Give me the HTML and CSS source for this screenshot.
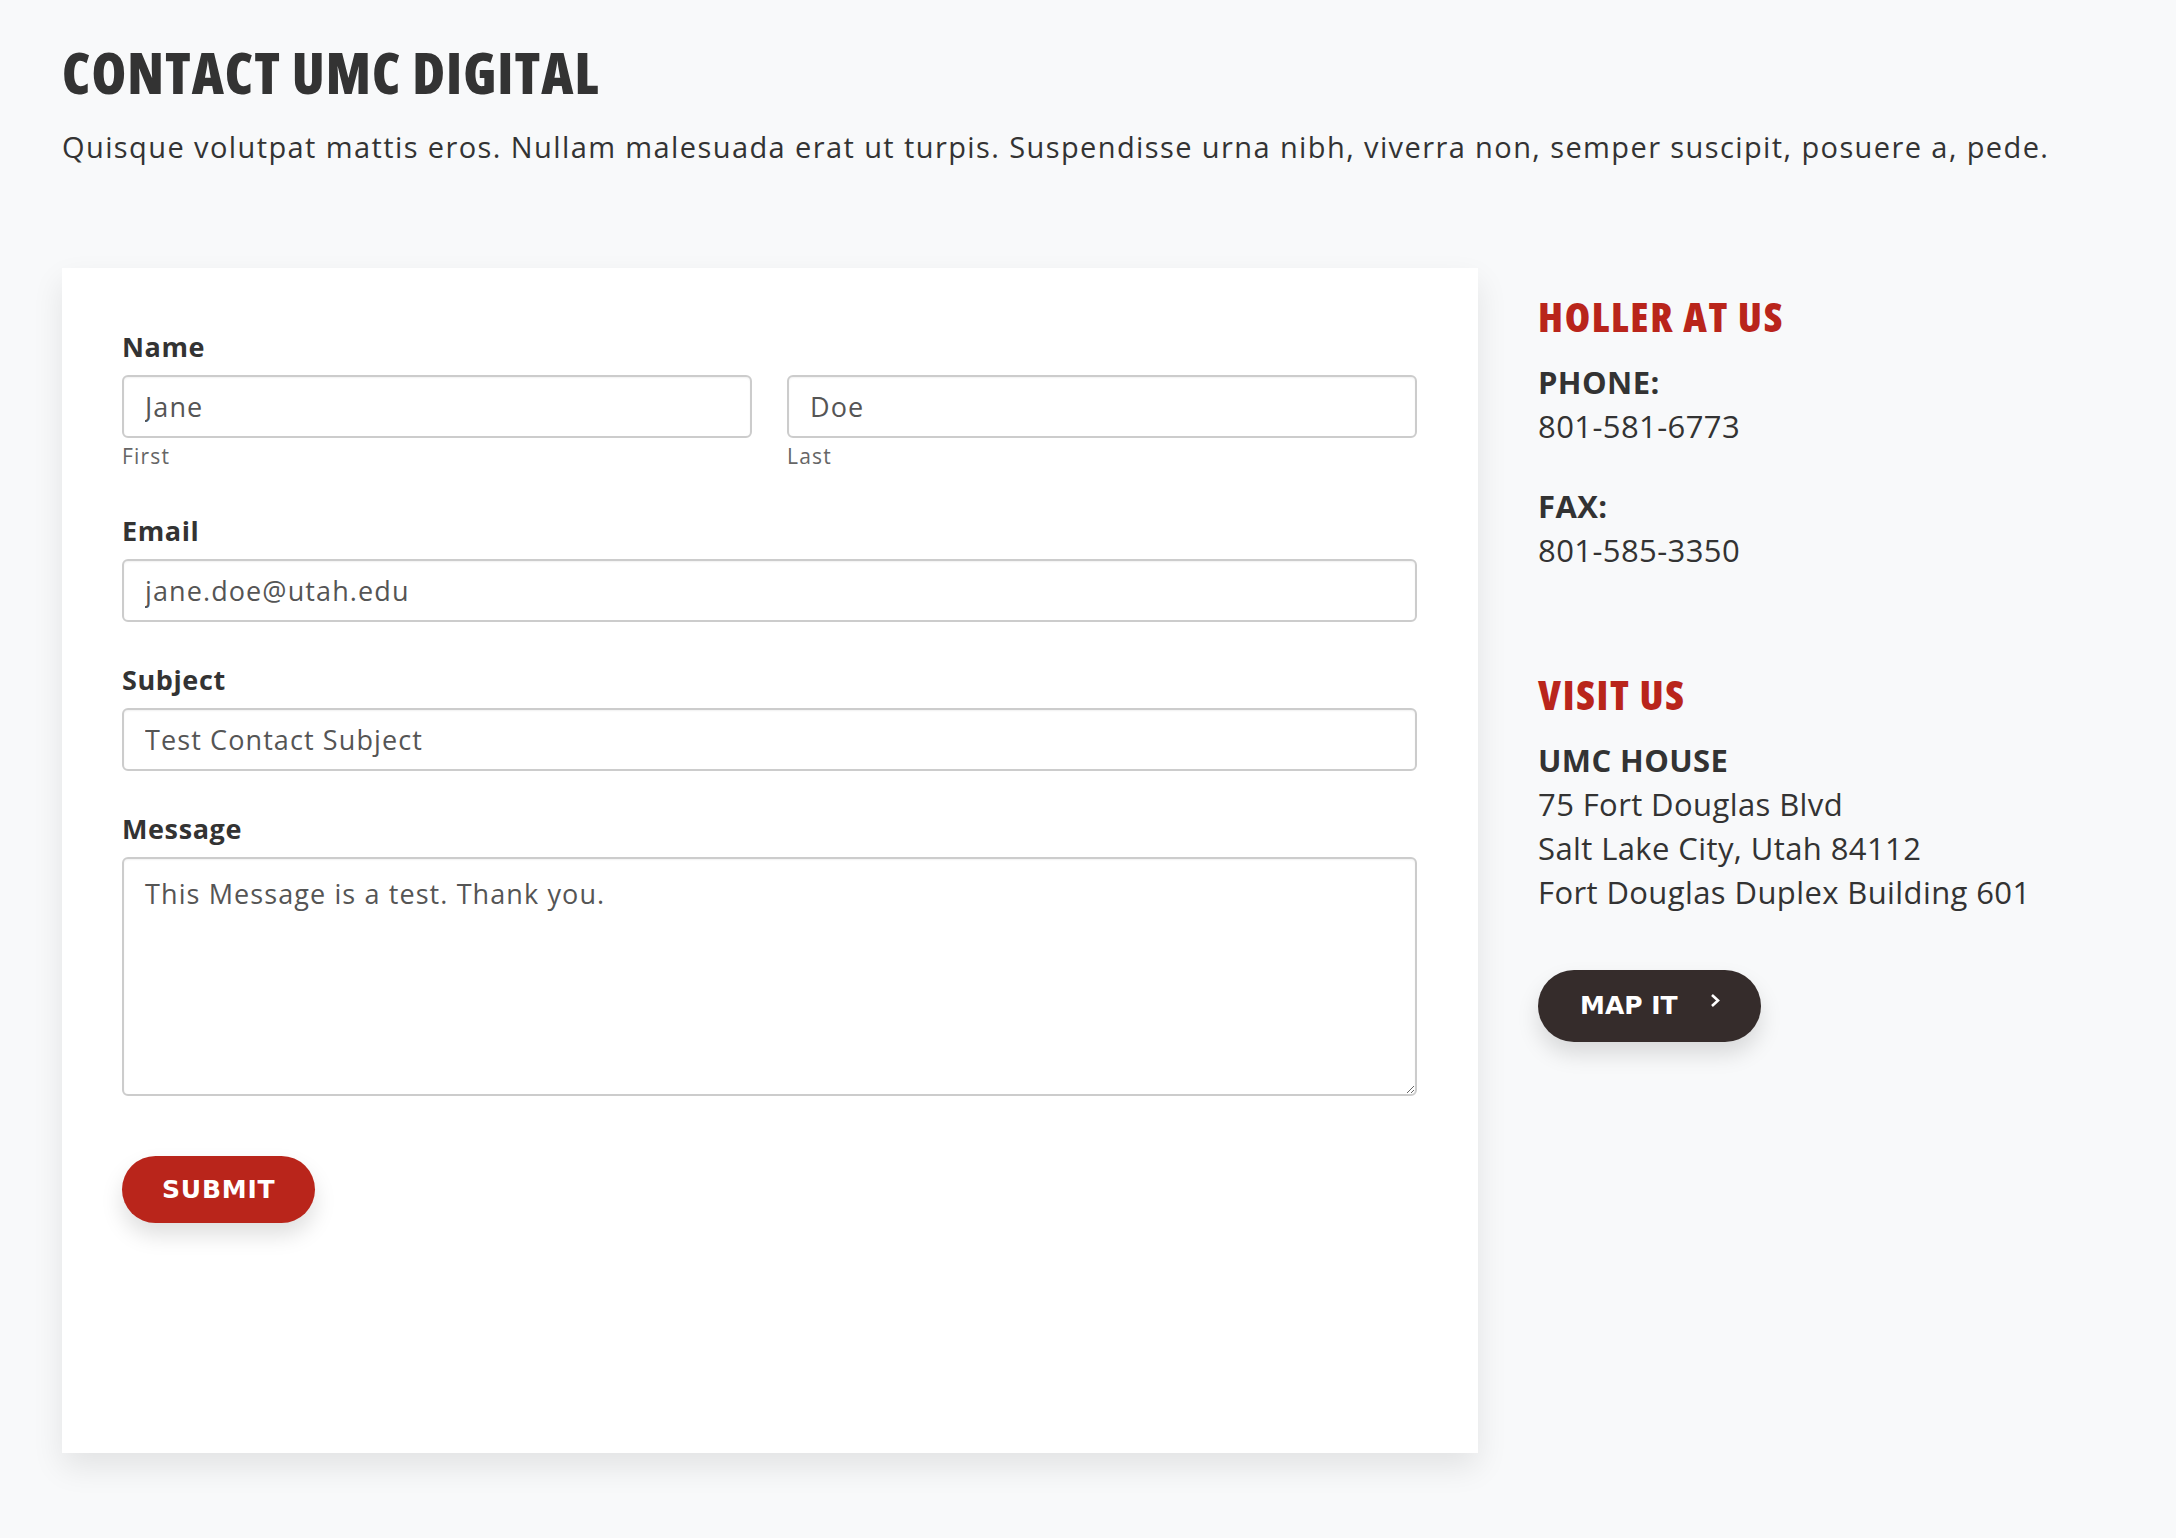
FILE: index.html
```html
<!DOCTYPE html>
<html lang="en">
<head>
  <meta charset="UTF-8">
  <meta name="viewport" content="width=device-width, initial-scale=1.0">
  <title>Contact UMC Digital</title>
  <link rel="stylesheet" href="styles.css">
</head>
<body>
  <div class="page">
    <h1>CONTACT UMC DIGITAL</h1>
    <p class="intro">Quisque volutpat mattis eros. Nullam malesuada erat ut turpis. Suspendisse urna nibh, viverra non, semper suscipit, posuere a, pede.</p>

    <div class="main">
      <form class="card">
        <div class="field name">
          <label>Name</label>
          <div class="name-row">
            <div>
              <input type="text" value="Jane">
              <div class="hint">First</div>
            </div>
            <div>
              <input type="text" value="Doe">
              <div class="hint">Last</div>
            </div>
          </div>
        </div>
        <div class="field">
          <label>Email</label>
          <input type="text" value="jane.doe@utah.edu">
        </div>
        <div class="field">
          <label>Subject</label>
          <input type="text" value="Test Contact Subject">
        </div>
        <div class="field">
          <label>Message</label>
          <textarea>This Message is a test. Thank you.</textarea>
        </div>
        <button type="button" class="btn btn-red">SUBMIT</button>
      </form>

      <div class="sidebar">
        <h2>HOLLER AT US</h2>
        <p class="info"><strong>PHONE:</strong><br>801-581-6773</p>
        <p class="info"><strong>FAX:</strong><br>801-585-3350</p>

        <h2 class="visit">VISIT US</h2>
        <p class="info"><strong>UMC HOUSE</strong><br>75 Fort Douglas Blvd<br>Salt Lake City, Utah 84112<br>Fort Douglas Duplex Building 601</p>

        <a href="#" class="btn btn-dark">MAP IT
          <svg width="11" height="15" viewBox="0 0 11 15"><path d="M2 2l6 5.5-6 5.5" fill="none" stroke="#fff" stroke-width="2.6"/></svg>
        </a>
      </div>
    </div>
  </div>
</body>
</html>
```

FILE: styles.css
```css
body {
  margin: 0;
  background: #f8f9fa;
  color: #333;
  font-family: 'Open Sans', 'Liberation Sans', sans-serif;
}
.page {
  padding: 41px 62px 80px;
}
h1 {
  margin: 0;
  font-family: 'Open Sans', 'DejaVu Sans Condensed', sans-serif;
  font-weight: 800;
  font-stretch: 75%;
  font-size: 56px;
  line-height: 62px;
  letter-spacing: 1px;
  color: #333;
}
.intro {
  margin: 22px 0 0;
  font-size: 29px;
  line-height: 1.5;
  letter-spacing: 1.4px;
}
.main {
  display: flex;
  gap: 60px;
  margin-top: 99px;
  align-items: flex-start;
}
.card {
  box-sizing: border-box;
  width: 1416px;
  min-height: 1185px;
  background: #fff;
  padding: 61px 61px 60px 60px;
  box-shadow: 0 14px 30px rgba(0,0,0,0.09);
}
.field {
  margin-bottom: 40px;
}
.field.name {
  margin-bottom: 43px;
}
.field label {
  display: block;
  font-size: 27px;
  font-weight: bold;
  line-height: 36px;
  letter-spacing: 0.6px;
  margin-bottom: 10px;
}
.name-row {
  display: grid;
  grid-template-columns: 1fr 1fr;
  gap: 35px;
}
input, textarea {
  box-sizing: border-box;
  display: block;
  width: 100%;
  font-family: 'Open Sans', sans-serif;
  font-size: 27px;
  letter-spacing: 1.1px;
  color: #555;
  border: 2px solid #ccc;
  border-radius: 6px;
  background: #fff;
  box-shadow: inset 0 1px 2px rgba(0,0,0,0.06);
}
input {
  height: 63px;
  padding: 0 21px;
}
textarea {
  height: 239px;
  padding: 15px 21px;
  line-height: 1.5;
  resize: vertical;
}
.hint {
  margin-top: 4px;
  font-size: 21px;
  line-height: 28px;
  letter-spacing: 1.2px;
  color: #666;
}
.btn {
  display: inline-flex;
  align-items: center;
  box-sizing: border-box;
  border: none;
  border-radius: 40px;
  color: #fff;
  font-family: 'DejaVu Sans', sans-serif;
  font-weight: bold;
  font-size: 25px;
  text-decoration: none;
  box-shadow: 0 12px 22px rgba(0,0,0,0.13);
}
.btn-red {
  margin-top: 20px;
  height: 67px;
  padding: 0 40px;
  letter-spacing: 0.8px;
  background: #b9251b;
}
.btn-dark {
  height: 72px;
  padding: 0 40px 0 42px;
  background: #352c2b;
  gap: 32px;
}
.btn-dark svg {
  margin-top: -10px;
}
.sidebar {
  padding-top: 26px;
}
.sidebar h2 {
  margin: 0;
  font-family: 'Open Sans', 'DejaVu Sans Condensed', sans-serif;
  font-weight: 800;
  font-stretch: 75%;
  font-size: 41px;
  line-height: 44px;
  letter-spacing: 1.7px;
  color: #b9251b;
}
.sidebar h2.visit {
  margin-top: 100px;
}
.info {
  margin: 22px 0 36px;
  font-size: 31px;
  line-height: 44px;
  letter-spacing: 0.4px;
}
.info + .info {
  margin-top: 0;
}
.visit + .info {
  margin-bottom: 56px;
}
```
